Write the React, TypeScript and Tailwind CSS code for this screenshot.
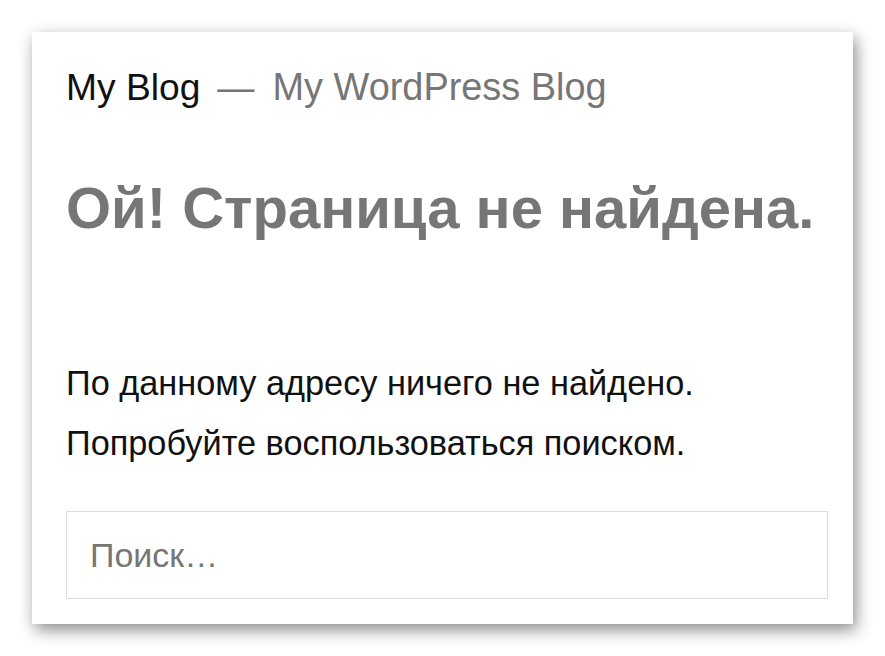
import React from "react";

const NotFound: React.FC = () => {
  return (
    <div className="min-h-screen bg-white p-8 font-['Liberation_Sans',Arial,sans-serif]">
      <div className="bg-white px-[34px] pt-[33px] pb-[25px] shadow-[3px_6px_15px_rgba(0,0,0,0.45)]">
        {/* шапка сайта */}
        <div className="flex items-baseline text-[37.2px] leading-[44px] whitespace-nowrap">
          <span className="text-[#111]">My Blog</span>
          <span className="ml-[17px] mr-[18px] text-[#767676]">—</span>
          <span className="text-[37.9px] text-[#767676]">My WordPress Blog</span>
        </div>

        <h1 className="mt-[67px] text-[58px] leading-[64px] font-bold text-[#767676] whitespace-nowrap">
          Ой! Страница не найдена.
        </h1>

        <div className="mt-[113px] text-[34.3px] leading-[60px] text-[#111]">
          <p>По данному адресу ничего не найдено.</p>
          <p>Попробуйте воспользоваться поиском.</p>
        </div>

        <input
          type="search"
          placeholder="Поиск…"
          className="mt-[38px] block h-[88px] w-[762px] border border-[#ddd] px-[23px] text-[34px] text-[#111] placeholder:text-[#767676] outline-none"
        />
      </div>
    </div>
  );
};

export default NotFound;
